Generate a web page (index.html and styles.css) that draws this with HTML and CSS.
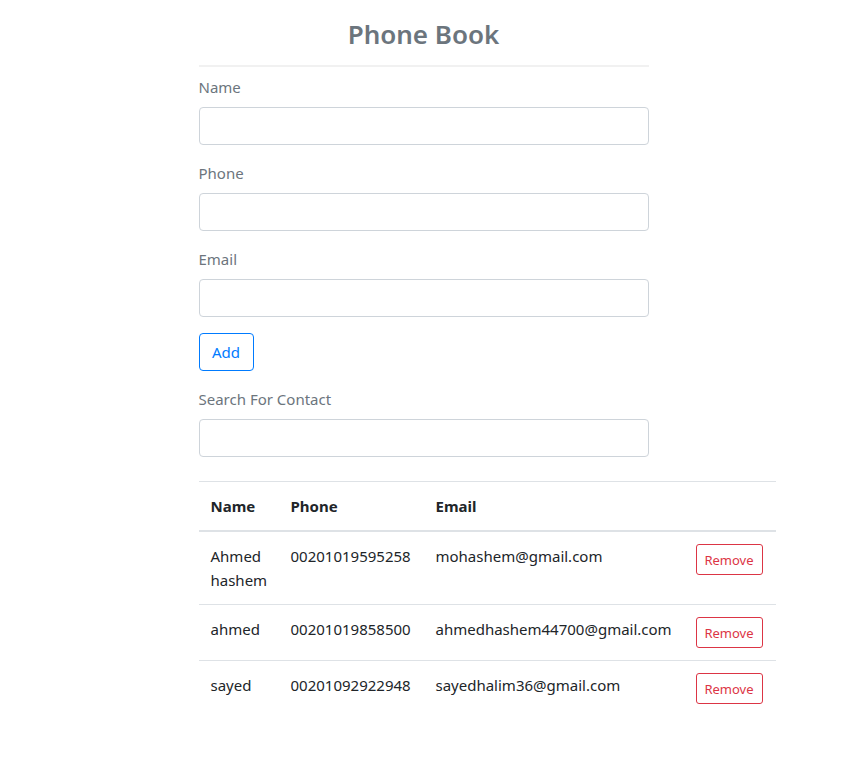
FILE: index.html
```html
<!DOCTYPE html>
<html>
<head>
<meta charset="utf-8">
<title>Phone Book</title>
<link rel="stylesheet" href="styles.css">
</head>
<body>
<div class="container">
  <h1 class="title">Phone Book</h1>
  <hr class="divider">
  <div class="form-group">
    <label class="label">Name</label>
    <input class="input" type="text">
  </div>
  <div class="form-group">
    <label class="label">Phone</label>
    <input class="input" type="text">
  </div>
  <div class="form-group">
    <label class="label">Email</label>
    <input class="input" type="text">
  </div>
  <button class="btn-add">Add</button>
  <div class="form-group search">
    <label class="label">Search For Contact</label>
    <input class="input" type="text">
  </div>
  <table class="table">
    <colgroup>
      <col class="c-name"><col class="c-phone"><col class="c-email"><col class="c-act">
    </colgroup>
    <thead>
      <tr><th>Name</th><th>Phone</th><th>Email</th><th></th></tr>
    </thead>
    <tbody>
      <tr><td>Ahmed hashem</td><td>00201019595258</td><td>mohashem@gmail.com</td><td><button class="btn-remove">Remove</button></td></tr>
      <tr><td>ahmed</td><td>00201019858500</td><td>ahmedhashem44700@gmail.com</td><td><button class="btn-remove">Remove</button></td></tr>
      <tr><td>sayed</td><td>00201092922948</td><td>sayedhalim36@gmail.com</td><td><button class="btn-remove">Remove</button></td></tr>
    </tbody>
  </table>
</div>
</body>
</html>
```
FILE: styles.css
```css
* { box-sizing: border-box; }
body {
  margin: 0;
  font-family: "Noto Sans", "Open Sans", sans-serif;
  font-size: 15px;
  line-height: 24px;
  color: #212529;
  background: #fff;
}
.container {
  width: 450px;
  margin: 0 auto;
}
.title {
  margin: 17px 0 0;
  font-size: 26px;
  line-height: 34px;
  font-weight: 600;
  color: #6c757d;
  text-align: center;
}
.divider {
  margin: 14px 0 8px;
  border: 0;
  border-top: 2px solid #f1f1f1;
}
.form-group {
  margin-bottom: 16px;
}
.label {
  display: block;
  color: #6c757d;
  margin-bottom: 8px;
}
.input {
  display: block;
  width: 100%;
  height: 38px;
  border: 1px solid #ced4da;
  border-radius: 4px;
  background: #fff;
  font: inherit;
}
.btn-add {
  display: block;
  height: 38px;
  width: 55px;
  padding: 0;
  background: #fff;
  border: 1px solid #007bff;
  border-radius: 4px;
  color: #007bff;
  font: inherit;
  margin-bottom: 16px;
}
.search {
  margin-bottom: 24px;
}
.table {
  width: 577px;
  table-layout: fixed;
  border-collapse: collapse;
}
.c-name { width: 80px; }
.c-phone { width: 145px; }
.c-email { width: 260px; }
.c-act { width: 92px; }
.table th, .table td {
  padding: 12px;
  text-align: left;
  vertical-align: top;
  border-top: 1px solid #dee2e6;
}
.table th {
  font-weight: 700;
  border-bottom: 2px solid #dee2e6;
}
.btn-remove {
  display: block;
  width: 67px;
  height: 31px;
  padding: 0;
  background: #fff;
  border: 1px solid #dc3545;
  border-radius: 3px;
  color: #dc3545;
  font-family: inherit;
  font-size: 13px;
}
```
